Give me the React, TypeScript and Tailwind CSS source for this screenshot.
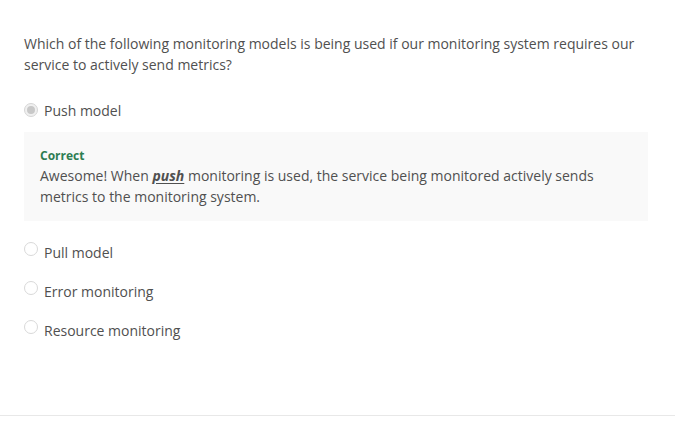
import React from "react";

const options = ["Push model", "Pull model", "Error monitoring", "Resource monitoring"];

const Radio = ({ checked }: { checked?: boolean }) => (
  <span
    className={
      "w-[14px] h-[14px] rounded-full border flex items-center justify-center shrink-0 " +
      (checked ? "border-[#d6d6d6] bg-[#f0f0f0]" : "border-[#d9d9d9] bg-white")
    }
  >
    {checked && <span className="w-[8px] h-[8px] rounded-full bg-[#c8c8c8]" />}
  </span>
);

export default function App() {
  return (
    <div
      className="w-[675px] h-[425px] bg-white text-[#505050] flex flex-col"
      style={{ fontFamily: '"Open Sans", "Noto Sans", sans-serif' }}
    >
      <div className="px-[24px] pt-[33px] flex-1">
        <p className="text-[14px] leading-[21px]">
          Which of the following monitoring models is being used if our monitoring system requires our
          service to actively send metrics?
        </p>

        <div className="mt-[25px] flex flex-col">
          <div className="flex items-center gap-[6px] h-[20px]">
            <Radio checked />
            <span className="text-[14px]">{options[0]}</span>
          </div>

          <div className="mt-[12px] mr-[3px] bg-[#f9f9f9] px-[16px] pt-[15px] pb-[14px]">
            <p className="text-[12px] font-bold text-[#2e7d52] leading-[18px]">Correct</p>
            <p className="text-[14px] leading-[21px]">
              Awesome! When{" "}
              <span className="font-bold italic underline underline-offset-2">push</span>{" "}
              monitoring is used, the service being monitored actively sends metrics to the
              monitoring system.
            </p>
          </div>

          <div className="mt-[21px] flex flex-col gap-[19px]">
            {options.slice(1).map((o) => (
              <div key={o} className="flex items-center gap-[6px] h-[20px]">
                <span className="-mt-[6px]">
                  <Radio />
                </span>
                <span className="text-[14px]">{o}</span>
              </div>
            ))}
          </div>
        </div>
      </div>
      <div className="h-[10px] border-t border-[#e8e8e8]" />
    </div>
  );
}
